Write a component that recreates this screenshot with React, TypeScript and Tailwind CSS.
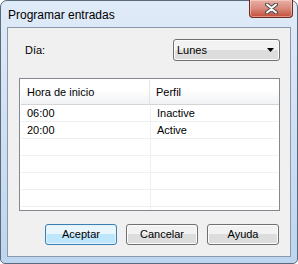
import React from "react";

const rows = [
  { time: "06:00", profile: "Inactive" },
  { time: "20:00", profile: "Active" },
  { time: "", profile: "" },
  { time: "", profile: "" },
  { time: "", profile: "" },
  { time: "", profile: "" },
  { time: "", profile: "" },
];

function CloseButton() {
  return (
    <div className="-mr-[2px] -mt-px flex h-[18px] w-[44px] items-center justify-center rounded-b-[4px] border border-t-0 border-[#6e2a20] bg-gradient-to-b from-[#e9b0a6] via-[#d98a7c] to-[#c24a36] shadow-[inset_0_0_0_1px_rgba(255,220,210,0.5)]">
      <svg width="13" height="11" viewBox="0 0 13 11">
        <path
          d="M2 1.5 L6.5 5 L11 1.5 M2 9.5 L6.5 6 L11 9.5"
          stroke="#4a4a4a"
          strokeWidth="4"
          fill="none"
          strokeLinecap="round"
        />
        <path
          d="M2 1.5 L6.5 5 L11 1.5 M2 9.5 L6.5 6 L11 9.5"
          stroke="#ffffff"
          strokeWidth="2"
          fill="none"
          strokeLinecap="round"
        />
      </svg>
    </div>
  );
}

function Button({ label, primary }: { label: string; primary?: boolean }) {
  return (
    <button
      className={
        primary
          ? "h-[21px] w-[72px] rounded-[3px] border border-[#3c7fb1] bg-gradient-to-b from-[#eaf6fd] from-50% to-[#bee6fd] to-50% text-[11px] text-black shadow-[inset_0_0_0_1px_#e3f3fc]"
          : "h-[21px] w-[72px] rounded-[3px] border border-[#707070] bg-gradient-to-b from-[#f2f2f2] from-50% to-[#dddddd] to-50% text-[11px] text-black shadow-[inset_0_0_0_1px_#fcfcfc]"
      }
    >
      {label}
    </button>
  );
}

export default function App() {
  return (
    <div
      className="h-[264px] w-[298px] bg-white"
      style={{ fontFamily: '"Liberation Sans", Arial, sans-serif' }}
    >
      {/* Window frame */}
      <div className="flex h-[264px] w-[298px] flex-col rounded-t-[7px] rounded-b-[5px] border border-[#5c6b7c] bg-gradient-to-b from-[#e0ebf8] via-[#cfe0f3] to-[#bdd5ef] px-[6px] pb-[6px]">
        {/* Title bar */}
        <div className="flex h-[26px] items-start">
          <span className="ml-px mt-[7px] text-[12px] leading-[14px] text-black">Programar entradas</span>
          <div className="ml-auto">
            <CloseButton />
          </div>
        </div>

        {/* Client area */}
        <div className="flex flex-1 flex-col border border-[#8a98a9] bg-[#f0f0f0] pl-[11px] pr-[10px] pt-[11px] text-[11px] text-black">
          <div className="flex h-[22px] items-center justify-between">
            <span className="ml-[6px]">Día:</span>
            <div className="flex h-[22px] w-[107px] items-center justify-between rounded-[3px] border border-[#707070] bg-gradient-to-b from-[#f2f2f2] from-50% to-[#dddddd] to-50% pl-[3px] pr-[5px] shadow-[inset_0_0_0_1px_#fcfcfc]">
              <span>Lunes</span>
              <svg width="7" height="4" viewBox="0 0 7 4">
                <path d="M0 0 H7 L3.5 4 Z" fill="#000" />
              </svg>
            </div>
          </div>

          {/* List */}
          <div className="mt-[17px] h-[133px] w-[261px] overflow-hidden border border-[#828790] bg-white pl-px pt-px">
            <div className="flex h-[25px] border-b border-[#d5d5d5] bg-gradient-to-b from-white from-40% to-[#f1f2f4]">
              <div className="flex w-[129px] items-center border-r border-[#e3e4e6] pl-[6px]">Hora de inicio</div>
              <div className="flex flex-1 items-center pl-[6px]">Perfil</div>
            </div>
            {rows.map((r, i) => (
              <div key={i} className="mr-px flex h-[17px] border-b border-[#f0f0f0]">
                <div className="flex w-[130px] items-center border-r border-[#f0f0f0] pl-[6px]">{r.time}</div>
                <div className="flex flex-1 items-center pl-[6px]">{r.profile}</div>
              </div>
            ))}
          </div>

          {/* Buttons */}
          <div className="mr-px mt-[13px] flex justify-end gap-[9px]">
            <Button label="Aceptar" primary />
            <Button label="Cancelar" />
            <Button label="Ayuda" />
          </div>
        </div>
      </div>
    </div>
  );
}
